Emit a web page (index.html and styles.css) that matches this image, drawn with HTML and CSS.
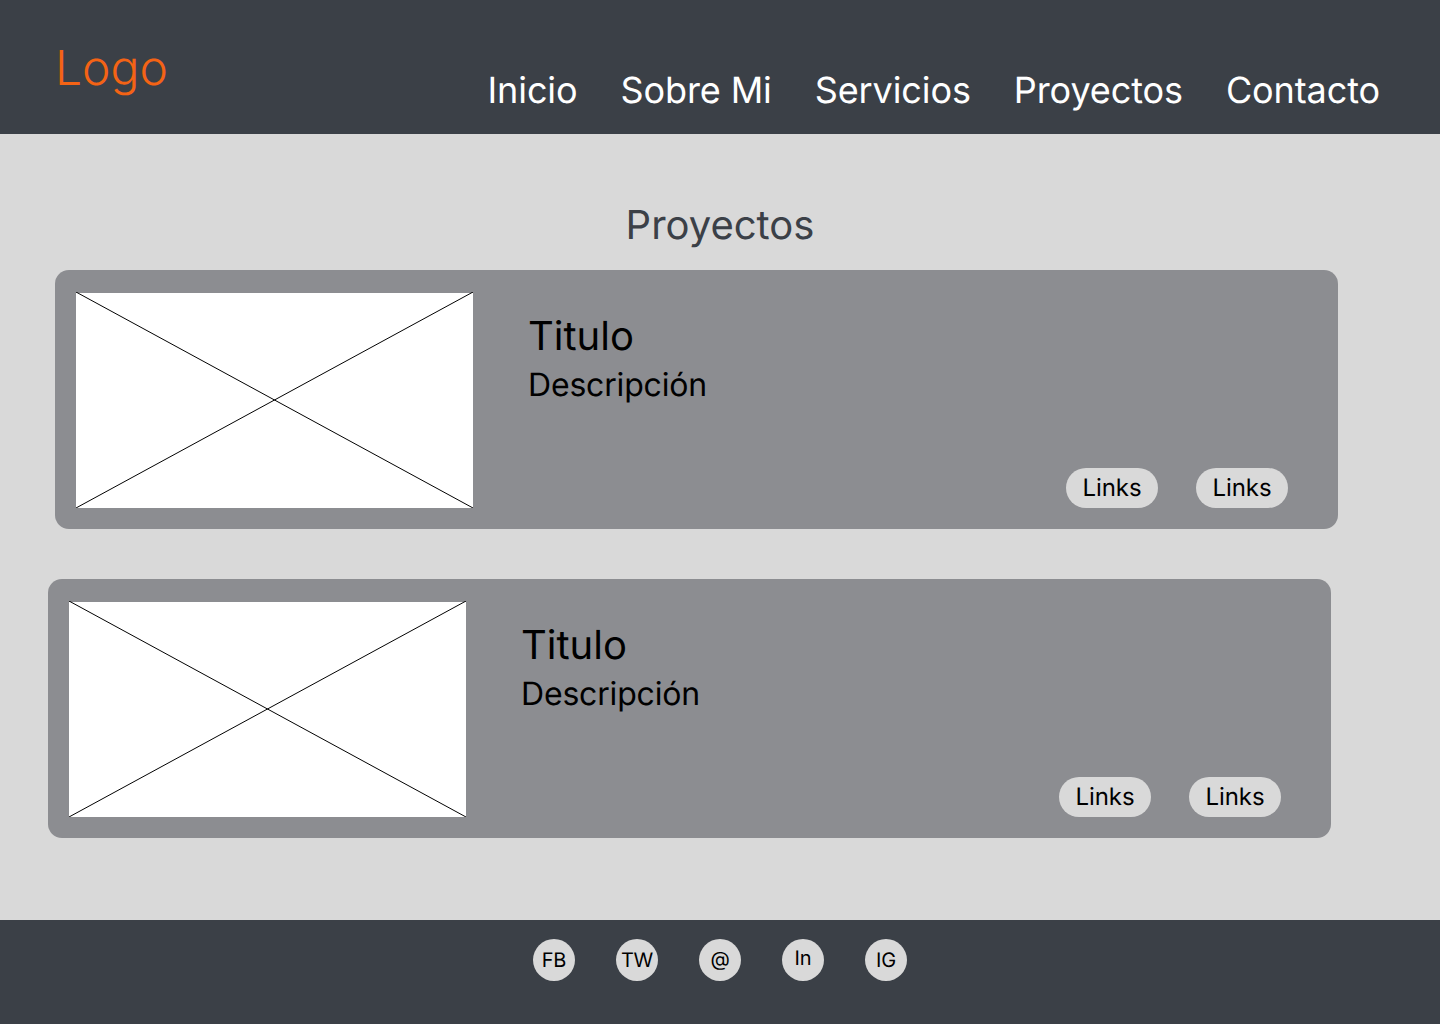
FILE: index.html
```html
<!DOCTYPE html>
<html lang="en">
<head>
    <meta charset="UTF-8">
    <meta name="viewport" content="width=device-width, initial-scale=1.0">
    <title>Proyectos</title>
    <link rel="stylesheet" href="styles.css">
</head>
<body>
    <header class="site-header">
        <a class="logo" href="#">Logo</a>
        <nav class="nav">
            <a href="#">Inicio</a>
            <a href="#">Sobre Mi</a>
            <a href="#">Servicios</a>
            <a href="#">Proyectos</a>
            <a href="#">Contacto</a>
        </nav>
    </header>

    <main class="content">
        <h1 class="section-title">Proyectos</h1>

        <!-- Project cards -->
        <article class="card card-first">
            <svg class="placeholder" viewBox="0 0 398 216" preserveAspectRatio="none">
                <rect y="1" width="398" height="215" fill="#fff"/>
                <path d="M0 0L398 216M398 0L0 216" stroke="#000" stroke-width="1" fill="none"/>
            </svg>
            <div class="card-body">
                <h2 class="card-title">Titulo</h2>
                <p class="card-text">Descripción</p>
                <div class="card-links">
                    <a class="pill" href="#">Links</a>
                    <a class="pill" href="#">Links</a>
                </div>
            </div>
        </article>

        <article class="card card-second">
            <svg class="placeholder" viewBox="0 0 398 216" preserveAspectRatio="none">
                <rect y="1" width="398" height="215" fill="#fff"/>
                <path d="M0 0L398 216M398 0L0 216" stroke="#000" stroke-width="1" fill="none"/>
            </svg>
            <div class="card-body">
                <h2 class="card-title">Titulo</h2>
                <p class="card-text">Descripción</p>
                <div class="card-links">
                    <a class="pill" href="#">Links</a>
                    <a class="pill" href="#">Links</a>
                </div>
            </div>
        </article>
    </main>

    <footer class="site-footer">
        <a class="social" href="#">FB</a>
        <a class="social" href="#">TW</a>
        <a class="social social-at" href="#">@</a>
        <a class="social social-raised" href="#">In</a>
        <a class="social" href="#">IG</a>
    </footer>
</body>
</html>
```

FILE: styles.css
```css
/* General Styles */
body {
    font-family: Inter, "Liberation Sans", sans-serif;
    text-rendering: geometricPrecision;
    background-color: #d9d9d9;
    color: #000;
    margin: 0;
    padding: 0;
    min-height: 1024px;
    display: flex;
    flex-direction: column;
}

a {
    color: inherit;
    text-decoration: none;
}

/* Header */
.site-header {
    background-color: #3b4047;
    height: 134px;
    box-sizing: border-box;
    padding: 0 60px 0 55px;
    display: flex;
    justify-content: space-between;
}

.logo {
    color: #f46315;
    font-size: 48px;
    font-weight: 300;
    line-height: 58px;
    margin-top: 39px;
}

.nav {
    display: flex;
    gap: 43px;
    margin-top: 68px;
    color: #fff;
    font-size: 36px;
    letter-spacing: -0.1px;
    line-height: 44px;
}

/* Main */
.content {
    flex: 1;
    padding-top: 67px;
}

.section-title {
    margin: 0 0 21px;
    color: #3b4047;
    font-size: 40px;
    font-weight: 400;
    line-height: 48px;
    text-align: center;
}

.card {
    background-color: #8c8d91;
    width: 1283px;
    height: 259px;
    box-sizing: border-box;
    border-radius: 14px;
    padding: 22px 0 0 21px;
    display: flex;
}

.card-first {
    margin-left: 55px;
}

.card-second {
    margin-left: 48px;
    margin-top: 50px;
}

.placeholder {
    display: block;
    width: 397px;
    height: 216px;
    flex: none;
}

.card-body {
    flex: 1;
    padding: 20px 50px 0 55px;
    display: flex;
    flex-direction: column;
}

.card-title {
    margin: 0;
    font-size: 40px;
    font-weight: 400;
    line-height: 48px;
}

.card-text {
    margin: 5px 0 0;
    font-size: 32px;
    letter-spacing: -0.18px;
    line-height: 39px;
}

.card-links {
    display: flex;
    justify-content: flex-end;
    gap: 38px;
    margin-top: 64px;
}

.pill {
    background-color: #d9d9d9;
    border-radius: 20px;
    height: 40px;
    width: 92px;
    font-size: 24px;
    letter-spacing: -0.1px;
    line-height: 40px;
    text-align: center;
}

/* Footer */
.site-footer {
    background-color: #3b4047;
    height: 104px;
    box-sizing: border-box;
    padding-top: 19px;
    display: flex;
    justify-content: center;
    gap: 41px;
}

.social {
    background-color: #d9d9d9;
    border-radius: 50%;
    width: 42px;
    height: 42px;
    font-size: 20px;
    letter-spacing: -0.2px;
    line-height: 42px;
    text-align: center;
}

.social-at {
    line-height: 40px;
}

.social-raised {
    line-height: 38px;
}
```
